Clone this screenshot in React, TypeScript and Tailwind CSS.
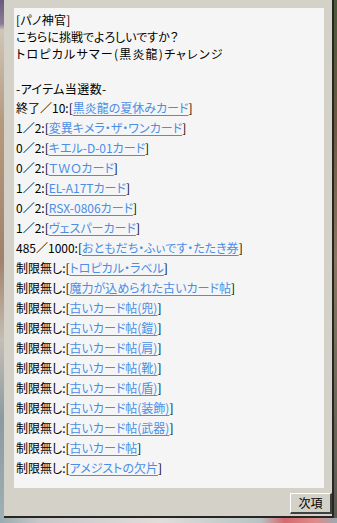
import React from "react";

const items: { count: string; name: string }[] = [
    { count: "終了／10:", name: "黒炎龍の夏休みカード" },
    { count: "1／2:", name: "変異キメラ・ザ・ワンカード" },
    { count: "0／2:", name: "キエル-D-01カード" },
    { count: "0／2:", name: "ＴＷＯカード" },
    { count: "1／2:", name: "EL-A17Tカード" },
    { count: "0／2:", name: "RSX-0806カード" },
    { count: "1／2:", name: "ヴェスパーカード" },
    { count: "485／1000:", name: "おともだち・ふぃです・たたき券" },
    { count: "制限無し:", name: "トロピカル・ラベル" },
    { count: "制限無し:", name: "魔力が込められた古いカード帖" },
    { count: "制限無し:", name: "古いカード帖(兜)" },
    { count: "制限無し:", name: "古いカード帖(鎧)" },
    { count: "制限無し:", name: "古いカード帖(肩)" },
    { count: "制限無し:", name: "古いカード帖(靴)" },
    { count: "制限無し:", name: "古いカード帖(盾)" },
    { count: "制限無し:", name: "古いカード帖(装飾)" },
    { count: "制限無し:", name: "古いカード帖(武器)" },
    { count: "制限無し:", name: "古いカード帖" },
    { count: "制限無し:", name: "アメジストの欠片" },
];

export default function App() {
    return (
        <div className="w-[337px] h-[523px] flex flex-col overflow-hidden bg-[#b9b4a8] font-['Noto_Sans_CJK_JP',sans-serif] [font-feature-settings:'palt'] text-[12px] text-black">
            <div className="flex h-[518px]">
                {/* game scene peeking out on the left */}
                <div className="w-[4px] bg-[linear-gradient(to_bottom,#6a5a7a_0px,#8c7c98_24px,#cfc6b8_30px,#b59a80_120px,#a0826a_260px,#c4beb4_340px,#8a9aa0_420px,#9fb0b4_518px)]" />

                <div className="w-[330px] flex flex-col bg-[#d4d1c8] border-r-2 border-b-2 border-[#262626]">
                    <div className="mt-[8px] ml-[10px] w-[310px] h-[480px] bg-[#f5f5f5] pl-[2px] pt-[3px]">
                        <div className="leading-[17px] tracking-[0.3px]">[パノ神官]</div>
                        <div className="leading-[17px]">こちらに挑戦でよろしいですか？</div>
                        <div className="leading-[17px] tracking-[1.2px]">トロピカルサマー(黒炎龍)チャレンジ</div>
                        <div className="h-[17px]" />
                        <div className="leading-[19px] tracking-[0.4px]">-アイテム当選数-</div>
                        {items.map((it, i) => (
                            <div key={i} className="leading-[20px] whitespace-nowrap">
                                {it.count}[
                                <span className="text-[#4a8ee6] underline underline-offset-[2px] decoration-[#4a8ee6]">{it.name}</span>
                                ]
                            </div>
                        ))}
                    </div>
                    <div className="flex justify-end mt-[5px]">
                        <button className="w-[42px] h-[21px] bg-[#d4d1c8] border border-t-white border-l-white border-r-2 border-b-2 border-r-[#404040] border-b-[#404040] text-[12px] leading-[18px] text-black">
                            次項
                        </button>
                    </div>
                </div>

                {/* game scene on the right */}
                <div className="w-[3px] bg-[linear-gradient(to_bottom,#4c5a3a_0px,#6b5a40_120px,#8a7860_260px,#6e6a58_400px,#5a5a50_518px)]" />
            </div>
            <div className="h-[5px] bg-[linear-gradient(to_right,#9aacb0_0px,#c8c8c8_40px,#e0ddd8_160px,#b8c4c4_260px,#d46a70_285px,#e08a8a_315px,#9aacb0_337px)]" />
        </div>
    );
}
